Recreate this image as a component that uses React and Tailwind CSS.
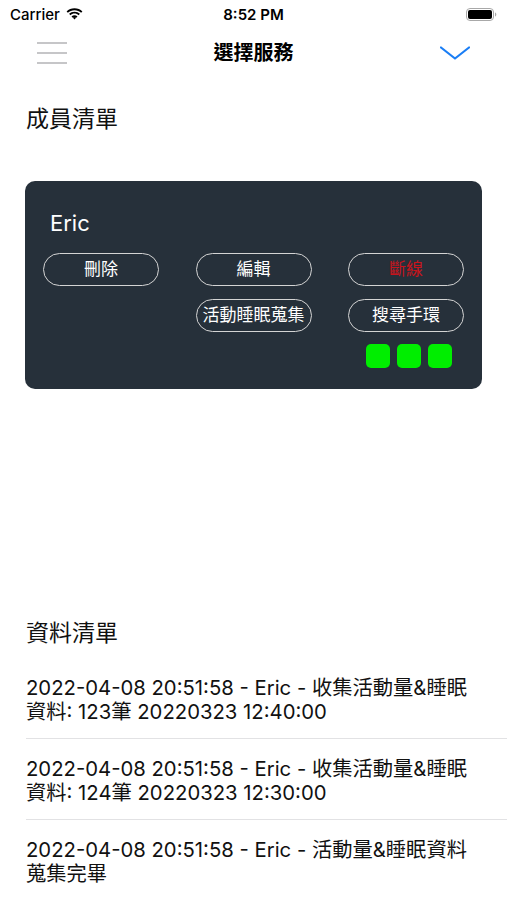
import React from "react";

const font = {
  fontFamily:
    '"Inter", "Noto Sans CJK TC", "Noto Sans", sans-serif',
};

const records = [
  "2022-04-08 20:51:58 - Eric - 收集活動量&睡眠資料: 123筆 20220323 12:40:00",
  "2022-04-08 20:51:58 - Eric - 收集活動量&睡眠資料: 124筆 20220323 12:30:00",
  "2022-04-08 20:51:58 - Eric - 活動量&睡眠資料蒐集完畢",
];

const StatusBar = () => (
  <div className="flex items-center justify-between h-[28px] px-[10px] relative">
    <div className="flex items-center gap-[6px]">
      <span className="text-[15px] font-medium text-black leading-none">Carrier</span>
      <svg width="17" height="12" viewBox="0 0 17 12">
        <path d="M8.5 2.2c2.6 0 4.9 1 6.6 2.6l1.3-1.4C14.4 1.5 11.6.3 8.5.3S2.6 1.5.6 3.4l1.3 1.4C3.6 3.2 5.9 2.2 8.5 2.2z" fill="#000" />
        <path d="M8.5 5.6c1.6 0 3 .6 4.1 1.6l1.3-1.4C12.5 4.5 10.6 3.7 8.5 3.7S4.5 4.5 3.1 5.8l1.3 1.4c1.1-1 2.5-1.6 4.1-1.6z" fill="#000" />
        <path d="M8.5 8.9c.7 0 1.3.3 1.8.7L8.5 11.5 6.7 9.6c.5-.4 1.1-.7 1.8-.7z" fill="#000" />
        <path d="M8.5 7.2c1.1 0 2.2.4 3 1.2l-1.3 1.3c-.5-.4-1.1-.7-1.7-.7s-1.3.3-1.7.7L5.5 8.4c.8-.8 1.9-1.2 3-1.2z" fill="#000" />
      </svg>
    </div>
    <span className="absolute left-1/2 -translate-x-1/2 text-[15px] font-semibold text-black leading-none">
      8:52 PM
    </span>
    <svg width="31" height="13" viewBox="0 0 31 13">
      <rect x="0.5" y="0.5" width="27" height="12" rx="3.5" fill="none" stroke="#a8a8a8" />
      <rect x="2" y="2" width="24" height="9" rx="2" fill="#000" />
      <path d="M29 4.5v4c.8-.3 1.3-1.1 1.3-2s-.5-1.7-1.3-2z" fill="#a8a8a8" />
    </svg>
  </div>
);

const NavBar = () => (
  <div className="relative flex items-center justify-between h-[50px] pl-[37px] pr-[37px]">
    <svg width="30" height="22" viewBox="0 0 30 22">
      <line x1="0" y1="1" x2="30" y2="1" stroke="#c6c6c8" strokeWidth="2" />
      <line x1="0" y1="11" x2="30" y2="11" stroke="#c6c6c8" strokeWidth="2" />
      <line x1="0" y1="21" x2="30" y2="21" stroke="#c6c6c8" strokeWidth="2" />
    </svg>
    <span className="absolute left-1/2 -translate-x-1/2 text-[20px] font-bold text-black">
      選擇服務
    </span>
    <svg width="30" height="14" viewBox="0 0 30 14">
      <polyline points="1,1.5 15,12.5 29,1.5" fill="none" stroke="#1a7ef5" strokeWidth="2.2" strokeLinecap="round" strokeLinejoin="round" />
    </svg>
  </div>
);

const PillButton = ({ label, red }) => (
  <button
    type="button"
    className={
      "h-[33px] rounded-full border-[1.5px] border-[#d4d4d4] text-[17px] leading-none " +
      (red ? "text-[#c8141c]" : "text-white")
    }
  >
    {label}
  </button>
);

const MemberCard = () => (
  <div className="mt-[47px] mx-[25px] rounded-[10px] bg-[#26303a] px-[18px] pt-[28px] pb-[21px]">
    <div className="pl-[7px] text-[22px] leading-[28px] text-white">Eric</div>
    <div className="mt-[16px] grid grid-cols-3 gap-x-[36.5px] gap-y-[13px]">
      <PillButton label="刪除" />
      <PillButton label="編輯" />
      <PillButton label="斷線" red />
      <div />
      <PillButton label="活動睡眠蒐集" />
      <PillButton label="搜尋手環" />
    </div>
    <div className="mt-[12px] flex justify-end gap-[7px] pr-[12px]">
      <div className="w-[24px] h-[24px] rounded-[5px] bg-[#00ee00]" />
      <div className="w-[24px] h-[24px] rounded-[5px] bg-[#00ee00]" />
      <div className="w-[24px] h-[24px] rounded-[5px] bg-[#00ee00]" />
    </div>
  </div>
);

export default function App() {
  return (
    <div className="w-[507px] h-[900px] bg-white overflow-hidden" style={font}>
      <StatusBar />
      <NavBar />
      <h2 className="mt-[26px] px-[26px] text-[23px] leading-[30px] font-normal text-[#111]">
        成員清單
      </h2>
      <MemberCard />
      <h2 className="mt-[229px] px-[26px] text-[23px] leading-[30px] font-normal text-[#111]">
        資料清單
      </h2>
      <div className="mt-[10px] pl-[26px]">
        {records.map((rec, i) => (
          <div key={i} className="pt-[18px] pb-[14px] pr-[30px] border-b border-[#e2e2e4]">
            <p className="text-[20.3px] leading-[24px] text-[#111]">{rec}</p>
          </div>
        ))}
      </div>
    </div>
  );
}
